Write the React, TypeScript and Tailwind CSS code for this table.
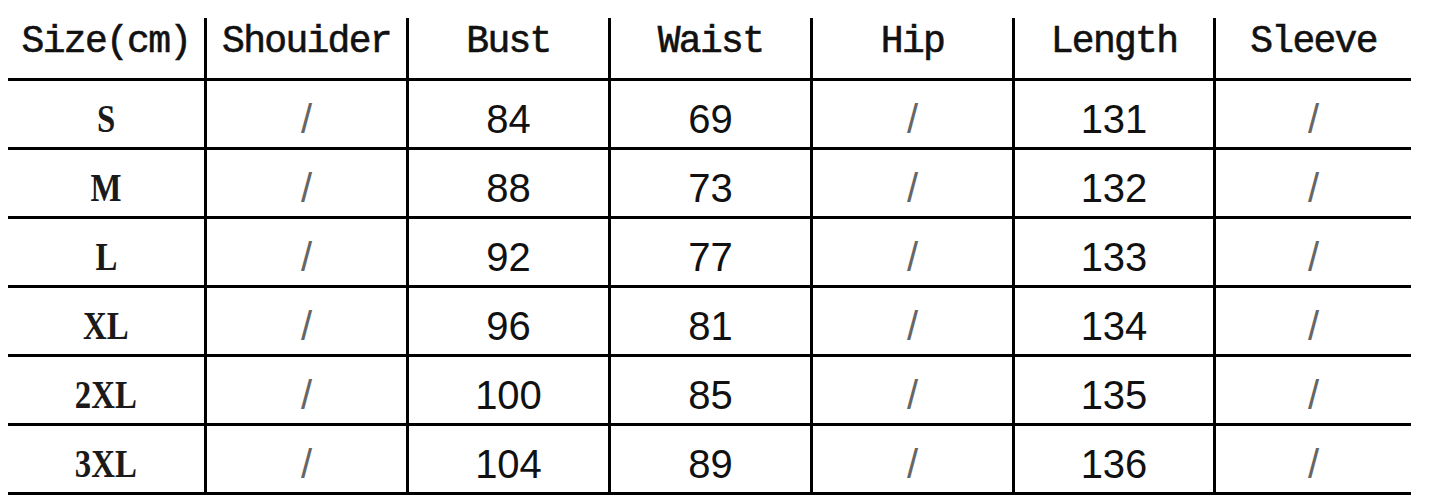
import React from "react";

const headers = ["Size(cm)", "Shouider", "Bust", "Waist", "Hip", "Length", "Sleeve"];
const rows: string[][] = [
  ["S", "/", "84", "69", "/", "131", "/"],
  ["M", "/", "88", "73", "/", "132", "/"],
  ["L", "/", "92", "77", "/", "133", "/"],
  ["XL", "/", "96", "81", "/", "134", "/"],
  ["2XL", "/", "100", "85", "/", "135", "/"],
  ["3XL", "/", "104", "89", "/", "136", "/"],
];

const grid = "grid grid-cols-[196px_202px_202px_202px_202px_201px_198px]";

export default function App() {
  return (
    <div className="w-[1429px] h-[504px] bg-white overflow-hidden">
      <div className="ml-[8px] mt-[18px] w-[1403px]">
        <div className={`${grid} h-[63px] border-b-[3px] border-black`}>
          {headers.map((h, i) => (
            <div
              key={h}
              className={`flex justify-center items-start pt-[2px] ${i > 0 ? "border-l-[3px] border-black" : ""}`}
            >
              <span className="font-['Liberation_Mono',monospace] text-[38px] leading-[44px] tracking-[-1.7px] text-[#111] [-webkit-text-stroke:0.6px_#111]">
                {h}
              </span>
            </div>
          ))}
        </div>
        {rows.map((r, ri) => (
          <div key={ri} className={`${grid} h-[69px] border-b-[3px] border-black`}>
            {r.map((c, i) => (
              <div
                key={i}
                className={`flex justify-center items-center pt-[10px] ${i > 0 ? "border-l-[3px] border-black" : ""}`}
              >
                {i === 0 ? (
                  <span className="inline-block scale-x-[0.82] font-['Liberation_Serif',serif] font-bold text-[40px] leading-none text-[#1a1a1a]">
                    {c}
                  </span>
                ) : c === "/" ? (
                  <span className="font-['Liberation_Sans',sans-serif] text-[40px] leading-none text-[#666]">/</span>
                ) : (
                  <span className="font-['Liberation_Sans',sans-serif] text-[40px] leading-none text-[#111]">{c}</span>
                )}
              </div>
            ))}
          </div>
        ))}
      </div>
    </div>
  );
}
